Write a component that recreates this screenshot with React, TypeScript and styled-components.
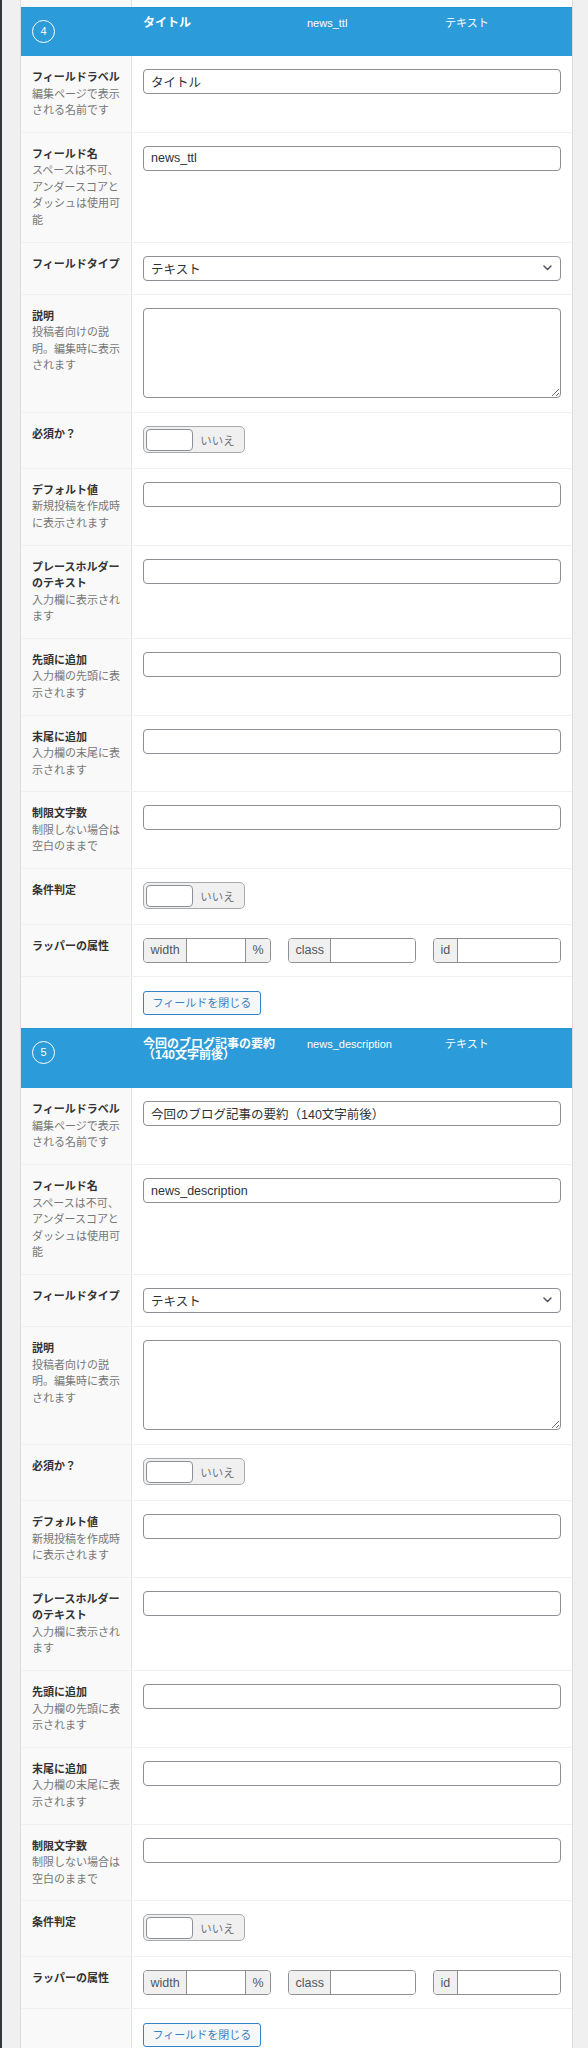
import React from "react";
import styled, { createGlobalStyle } from "styled-components";

const GlobalStyle = createGlobalStyle`
  *, *::before, *::after { box-sizing: border-box; }
  html, body { margin: 0; padding: 0; }
  body {
    background: #f0f0f1;
    font-family: "Liberation Sans", "Noto Sans CJK JP", sans-serif;
    color: #32373c;
  }
`;

const Page = styled.div`
  display: flex;
  min-height: 2048px;
`;

const AdminEdge = styled.div`
  flex: none;
  width: 2px;
  background: #33373a;
`;

const Main = styled.main`
  flex: 1;
  padding: 0 15px 0 18px;
`;

const Panel = styled.div`
  background: #fff;
  border-left: 1px solid #dcdcde;
  border-right: 1px solid #dcdcde;
`;

/* bottom edge of the field listed above */
const PrevTail = styled.div`
  display: grid;
  grid-template-columns: 111px 1fr;
  height: 7px;
`;

const TailLabel = styled.div`
  background: #f9f9f9;
  border-right: 1px solid #e1e1e1;
`;

/* blue field handle */
const Handle = styled.div`
  display: grid;
  grid-template-columns: 111px 164px 138px 1fr;
  padding: 10px 0 0 11px;
  background: #2b9bd9;
  border-top: 1px solid #2696d3;
  color: #fff;
`;

const OrderBadge = styled.span`
  display: flex;
  align-items: center;
  justify-content: center;
  width: 23px;
  height: 23px;
  margin-top: 2px;
  border: 1.5px solid #fff;
  border-radius: 50%;
  font-size: 11px;
  line-height: 1;
`;

const HandleTitle = styled.div`
  padding: 0 16px 27px 0;
  font-size: 12px;
  font-weight: bold;
  line-height: 11px;
`;

const HandleMeta = styled.div`
  font-size: 11px;
  line-height: 11px;
`;

/* settings table */
const Row = styled.div<{ $flush?: boolean }>`
  display: grid;
  grid-template-columns: 111px 1fr;
  border-top: ${({ $flush }) => ($flush ? "none" : "1px solid #f0f0f0")};
`;

const LabelCell = styled.div`
  background: #f9f9f9;
  border-right: 1px solid #e1e1e1;
  padding: 13px 10.5px 13.25px 11px;
  font-size: 11px;
  line-height: 16.5px;
`;

const LabelTitle = styled.div`
  font-weight: bold;
  color: #333;
`;

const LabelDesc = styled.div`
  color: #777;
`;

const InputCell = styled.div`
  min-width: 0;
  padding: 13px 11px 13.25px;
`;

const TextInput = styled.input`
  display: block;
  width: 100%;
  height: 25px;
  margin: 0;
  padding: 0 7px;
  border: 1px solid #8c8f94;
  border-radius: 4px;
  background: #fff;
  font-family: inherit;
  font-size: 12.5px;
  color: #2c3338;
  outline: none;
`;

const TextArea = styled.textarea`
  display: block;
  width: 100%;
  height: 90px;
  margin: 0 0 1px;
  padding: 4px 7px;
  border: 1px solid #8c8f94;
  border-radius: 4px;
  background: #fff;
  font-family: inherit;
  font-size: 12.5px;
  color: #2c3338;
  outline: none;
`;

const SelectBox = styled.div`
  display: flex;
  align-items: center;
  justify-content: space-between;
  height: 25px;
  padding: 0 8px 0 7px;
  border: 1px solid #8c8f94;
  border-radius: 4px;
  background: #fff;
  font-size: 12.5px;
  color: #2c3338;
`;

const Switch = styled.div`
  display: inline-flex;
  align-items: center;
  width: 102px;
  height: 27px;
  padding: 0 2px;
  border: 1px solid #a7aaad;
  border-radius: 5px;
  background: #f0f0f1;
`;

const SwitchKnob = styled.span`
  flex: none;
  width: 47px;
  height: 22px;
  background: #fff;
  border: 1px solid #8c8f94;
  border-radius: 4px;
`;

const SwitchText = styled.span`
  flex: 1;
  text-align: center;
  font-size: 11.5px;
  color: #777;
`;

const AttrGrid = styled.div`
  display: grid;
  grid-template-columns: repeat(3, 1fr);
  gap: 17px;
`;

const AttrGroup = styled.div`
  display: flex;
  height: 25px;
  border: 1px solid #8c8f94;
  border-radius: 4px;
  overflow: hidden;
  background: #fff;
`;

const Addon = styled.span<{ $side: "prepend" | "append" }>`
  flex: none;
  display: flex;
  align-items: center;
  padding: 0 6.5px;
  background: #f0f0f1;
  color: #50575e;
  font-size: 12.5px;
  ${({ $side }) =>
    $side === "prepend" ? "border-right: 1px solid #8c8f94;" : "border-left: 1px solid #8c8f94;"}
`;

const AttrInput = styled.input`
  flex: 1;
  min-width: 0;
  margin: 0;
  padding: 0 6px;
  border: 0;
  background: #fff;
  font-family: inherit;
  font-size: 12.5px;
  outline: none;
`;

const CloseButton = styled.button`
  display: block;
  height: 24px;
  margin: 1px 0 0;
  padding: 0 8.5px;
  border: 1px solid #3582c4;
  border-radius: 3px;
  background: #f6f7f7;
  color: #3582c4;
  font-family: inherit;
  font-size: 11px;
  line-height: 22px;
  cursor: pointer;
`;

const Chevron = () => (
  <svg width="9" height="6" viewBox="0 0 9 6" fill="none">
    <path d="M1 1l3.5 3.5L8 1" stroke="#50575e" strokeWidth="1.5" strokeLinecap="round" strokeLinejoin="round" />
  </svg>
);

const Toggle = () => (
  <Switch>
    <SwitchKnob />
    <SwitchText>いいえ</SwitchText>
  </Switch>
);

type Setting = { label?: string; desc?: string; control: React.ReactNode };

type FieldProps = {
  order: number;
  title: string;
  name: string;
  type: string;
};

const settingsFor = ({ title, name, type }: FieldProps): Setting[] => [
  { label: "フィールドラベル", desc: "編集ページで表示される名前です", control: <TextInput defaultValue={title} /> },
  {
    label: "フィールド名",
    desc: "スペースは不可、アンダースコアとダッシュは使用可能",
    control: <TextInput defaultValue={name} />,
  },
  {
    label: "フィールドタイプ",
    control: (
      <SelectBox>
        <span>{type}</span>
        <Chevron />
      </SelectBox>
    ),
  },
  { label: "説明", desc: "投稿者向けの説明。編集時に表示されます", control: <TextArea /> },
  { label: "必須か？", control: <Toggle /> },
  { label: "デフォルト値", desc: "新規投稿を作成時に表示されます", control: <TextInput /> },
  { label: "プレースホルダーのテキスト", desc: "入力欄に表示されます", control: <TextInput /> },
  { label: "先頭に追加", desc: "入力欄の先頭に表示されます", control: <TextInput /> },
  { label: "末尾に追加", desc: "入力欄の末尾に表示されます", control: <TextInput /> },
  { label: "制限文字数", desc: "制限しない場合は空白のままで", control: <TextInput /> },
  { label: "条件判定", control: <Toggle /> },
  {
    label: "ラッパーの属性",
    control: (
      <AttrGrid>
        <AttrGroup>
          <Addon $side="prepend">width</Addon>
          <AttrInput />
          <Addon $side="append">%</Addon>
        </AttrGroup>
        <AttrGroup>
          <Addon $side="prepend">class</Addon>
          <AttrInput />
        </AttrGroup>
        <AttrGroup>
          <Addon $side="prepend">id</Addon>
          <AttrInput />
        </AttrGroup>
      </AttrGrid>
    ),
  },
  { control: <CloseButton type="button">フィールドを閉じる</CloseButton> },
];

const FieldObject = (props: FieldProps) => (
  <section>
    <Handle>
      <div>
        <OrderBadge>{props.order}</OrderBadge>
      </div>
      <HandleTitle>{props.title}</HandleTitle>
      <HandleMeta>{props.name}</HandleMeta>
      <HandleMeta>{props.type}</HandleMeta>
    </Handle>
    {settingsFor(props).map((s, i) => (
      <Row key={i} $flush={i === 0}>
        <LabelCell>
          {s.label && <LabelTitle>{s.label}</LabelTitle>}
          {s.desc && <LabelDesc>{s.desc}</LabelDesc>}
        </LabelCell>
        <InputCell>{s.control}</InputCell>
      </Row>
    ))}
  </section>
);

export default function App() {
  return (
    <>
      <GlobalStyle />
      <Page>
        <AdminEdge />
        <Main>
          <Panel>
            <PrevTail>
              <TailLabel />
              <div />
            </PrevTail>
            <FieldObject order={4} title="タイトル" name="news_ttl" type="テキスト" />
            <FieldObject
              order={5}
              title="今回のブログ記事の要約（140文字前後）"
              name="news_description"
              type="テキスト"
            />
          </Panel>
        </Main>
      </Page>
    </>
  );
}
